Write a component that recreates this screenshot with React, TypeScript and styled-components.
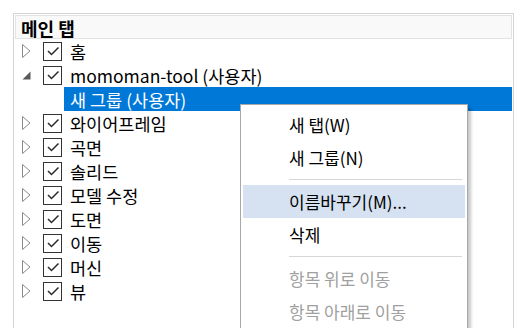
import styled, { createGlobalStyle } from "styled-components";

const GlobalStyle = createGlobalStyle`
  html, body {
    margin: 0;
    padding: 0;
    background: #ffffff;
    overflow: hidden;
  }
  body {
    font-family: "Noto Sans CJK KR", "Noto Sans", sans-serif;
  }
`;

const Page = styled.div`
  position: relative;
  width: 528px;
  height: 328px;
  padding: 13px 0 0 13px;
  box-sizing: border-box;
`;

const Panel = styled.div`
  width: 501px;
  height: 330px;
  border: 1px solid #d4d4d4;
  border-bottom: none;
  box-sizing: border-box;
  padding: 1px;
`;

const Header = styled.div`
  height: 24px;
  background: #f9f9f9;
  border: 1px solid #e3e3e3;
  box-sizing: border-box;
  display: flex;
  align-items: center;
  padding: 1px 0 0 5px;
  font-size: 18px;
  font-weight: 700;
  color: #000;
`;

const Tree = styled.div`
  display: flex;
  flex-direction: column;
`;

const Row = styled.div`
  height: 24px;
  display: flex;
  align-items: center;
  font-size: 17.5px;
  color: #000;
`;

const Expander = styled.span`
  width: 28px;
  display: flex;
  justify-content: flex-start;
  padding-left: 7px;
  box-sizing: border-box;
`;

const CheckBox = styled.span`
  width: 19px;
  height: 19px;
  border: 1px solid #333333;
  box-sizing: border-box;
  display: flex;
  align-items: center;
  justify-content: center;
  background: #fff;
  margin-right: 5px;
`;

const Label = styled.span<{ $selected?: boolean }>`
  height: 24px;
  line-height: 26px;
  padding-left: ${(p) => (p.$selected ? "6px" : "3px")};
  flex: 1;
  background: ${(p) => (p.$selected ? "#0078d7" : "transparent")};
  color: ${(p) => (p.$selected ? "#ffffff" : "#000000")};
  white-space: nowrap;
`;

const Indent = styled.span`
  flex: 0 0 49px;
`;

const Menu = styled.div`
  position: absolute;
  left: 240px;
  top: 104px;
  width: 228px;
  padding: 3px 1px;
  background: #ffffff;
  border: 1px solid #a8a8a8;
  box-sizing: border-box;
  box-shadow: 3px 3px 3px rgba(0, 0, 0, 0.22);
  font-family: "Noto Sans CJK KR", "Noto Sans", sans-serif;
`;

const MenuItem = styled.div<{ $hover?: boolean; $disabled?: boolean }>`
  height: 33px;
  margin: 0 1px;
  display: flex;
  align-items: center;
  padding-left: 46px;
  font-size: 17px;
  color: ${(p) => (p.$disabled ? "#a0a0a0" : "#000000")};
  background: ${(p) => (p.$hover ? "#d6e2f2" : "transparent")};
`;

const Separator = styled.div`
  height: 11px;
  display: flex;
  align-items: center;
  padding: 0 4px 0 47px;
  &::after {
    content: "";
    flex: 1;
    height: 1px;
    background: #d7d7d7;
  }
`;

function Triangle({ open }: { open?: boolean }) {
  if (open) {
    return (
      <svg width="9" height="9" viewBox="0 0 9 9">
        <path d="M8.5 0.5 L8.5 8.5 L0.5 8.5 Z" fill="#595959" />
      </svg>
    );
  }
  return (
    <svg width="9" height="14" viewBox="0 0 9 14">
      <path d="M0.5 0.5 L8 7 L0.5 13.5 Z" fill="none" stroke="#8a8a8a" strokeWidth="1" />
    </svg>
  );
}

function Check() {
  return (
    <svg width="14" height="12" viewBox="0 0 14 12">
      <path d="M2 6 L5.5 9.5 L12.5 2.5" fill="none" stroke="#2b2b2b" strokeWidth="1.5" />
    </svg>
  );
}

const items = ["와이어프레임", "곡면", "솔리드", "모델 수정", "도면", "이동", "머신", "뷰"];

function TreeRow({ label, open }: { label: string; open?: boolean }) {
  return (
    <Row>
      <Expander>
        <Triangle open={open} />
      </Expander>
      <CheckBox>
        <Check />
      </CheckBox>
      <Label>{label}</Label>
    </Row>
  );
}

export default function App() {
  return (
    <>
      <GlobalStyle />
      <Page>
        <Panel>
          <Header>메인 탭</Header>
          <Tree>
            <TreeRow label="홈" />
            <TreeRow label="momoman-tool (사용자)" open />
            <Row>
              <Indent />
              <Label $selected>새 그룹 (사용자)</Label>
            </Row>
            {items.map((it) => (
              <TreeRow key={it} label={it} />
            ))}
          </Tree>
        </Panel>
        <Menu>
          <MenuItem>새 탭(W)</MenuItem>
          <MenuItem>새 그룹(N)</MenuItem>
          <Separator />
          <MenuItem $hover>이름바꾸기(M)...</MenuItem>
          <MenuItem>삭제</MenuItem>
          <Separator />
          <MenuItem $disabled>항목 위로 이동</MenuItem>
          <MenuItem $disabled>항목 아래로 이동</MenuItem>
        </Menu>
      </Page>
    </>
  );
}
